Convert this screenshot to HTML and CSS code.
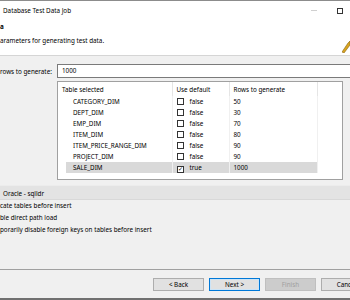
FILE: index.html
```html
<!DOCTYPE html>
<html lang="en">
<head>
    <meta charset="UTF-8">
    <title>Database Test Data Job</title>
    <link rel="stylesheet" href="styles.css">
</head>
<body>
    <div class="window">
        <div class="titlebar">
            <span class="title">Database Test Data Job</span>
            <span class="win-btns">
                <span class="btn-min"></span>
                <span class="btn-max"></span>
            </span>
        </div>

        <div class="banner">
            <div class="banner-text">
                <div class="banner-title">a</div>
                <div class="banner-desc">arameters for generating test data.</div>
            </div>
            <svg class="banner-img" width="8" height="12" viewBox="0 0 8 12">
                <polygon points="0,11 6,2 8,0 8,4 2,12" fill="#d9a521" stroke="#8a6410" stroke-width="0.6"/>
            </svg>
        </div>

        <div class="content">
            <div class="rows-field">
                <label class="rows-label">rows to generate:</label>
                <div class="text-input">1000</div>
            </div>

            <div class="table-box">
                <table class="grid">
                    <thead>
                        <tr>
                            <th class="col-name">Table selected</th>
                            <th class="col-default">Use default</th>
                            <th class="col-rows">Rows to generate</th>
                            <th class="col-fill"></th>
                        </tr>
                    </thead>
                    <tbody>
                        <tr>
                            <td class="name">CATEGORY_DIM</td>
                            <td><span class="check"></span>false</td>
                            <td>50</td>
                            <td class="fill"></td>
                        </tr>
                        <tr>
                            <td class="name">DEPT_DIM</td>
                            <td><span class="check"></span>false</td>
                            <td>30</td>
                            <td class="fill"></td>
                        </tr>
                        <tr>
                            <td class="name">EMP_DIM</td>
                            <td><span class="check"></span>false</td>
                            <td>70</td>
                            <td class="fill"></td>
                        </tr>
                        <tr>
                            <td class="name">ITEM_DIM</td>
                            <td><span class="check"></span>false</td>
                            <td>80</td>
                            <td class="fill"></td>
                        </tr>
                        <tr>
                            <td class="name">ITEM_PRICE_RANGE_DIM</td>
                            <td><span class="check"></span>false</td>
                            <td>90</td>
                            <td class="fill"></td>
                        </tr>
                        <tr>
                            <td class="name">PROJECT_DIM</td>
                            <td><span class="check"></span>false</td>
                            <td>90</td>
                            <td class="fill"></td>
                        </tr>
                        <tr class="selected">
                            <td class="name">SALE_DIM</td>
                            <td><span class="check checked">&#10003;</span>true</td>
                            <td>1000</td>
                            <td class="fill"></td>
                        </tr>
                    </tbody>
                </table>
            </div>

            <div class="group-head">Oracle - sqlldr</div>
            <div class="options">
                <div>cate tables before insert</div>
                <div>ble direct path load</div>
                <div>porarily disable foreign keys on tables before insert</div>
            </div>
        </div>

        <div class="footer">
            <button class="wiz-btn">&lt; Back</button>
            <button class="wiz-btn default">Next &gt;</button>
            <button class="wiz-btn" disabled>Finish</button>
            <button class="wiz-btn">Cancel</button>
        </div>
    </div>
</body>
</html>
```

FILE: styles.css
```css
* {
    box-sizing: border-box;
}

body {
    margin: 0;
    font-family: "Noto Sans", sans-serif;
    font-size: 6.3px;
    color: #000;
    background: #f0f0f0;
}

.window {
    width: 350px;
    height: 300px;
    display: flex;
    flex-direction: column;
    overflow: hidden;
    border-top: 1px solid #8c8c8c;
    border-bottom: 2px solid #707070;
}

.titlebar {
    height: 19px;
    background: #fff;
    display: flex;
    align-items: center;
    padding-left: 3px;
}

.title {
    flex: 1;
}

.win-btns {
    display: flex;
    align-items: center;
    gap: 20px;
    padding-right: 7px;
}

.btn-min {
    width: 6px;
    height: 1px;
    background: #d0d0d0;
}

.btn-max {
    width: 6px;
    height: 6px;
    border: 1px solid #333;
}

.banner {
    height: 36px;
    background: #fff;
    display: flex;
    border-bottom: 1px solid #d5d5d5;
}

.banner-text {
    flex: 1;
    padding-top: 2px;
    line-height: 10px;
}

.banner-title {
    font-weight: bold;
}

.banner-desc {
    margin-top: 4px;
}

.banner-img {
    align-self: flex-end;
    margin-bottom: 2px;
}

.content {
    flex: 1;
    display: flex;
    flex-direction: column;
}

.rows-field {
    display: flex;
    align-items: center;
    margin-top: 8px;
    height: 14px;
}

.rows-label {
    width: 57px;
}

.text-input {
    flex: 1;
    height: 14px;
    line-height: 12px;
    padding-left: 4px;
    background: #fff;
    border: 1px solid #7a7a7a;
    margin-right: -2px;
}

.table-box {
    margin: 3px 7px 0 57px;
    height: 99px;
    background: #fff;
    border: 1px solid #a0a0a0;
}

.grid {
    border-collapse: collapse;
    width: 100%;
    table-layout: fixed;
}

.grid th {
    height: 14px;
    font-weight: normal;
    text-align: left;
    padding: 0 0 0 4px;
    border-right: 1px solid #e5e5e5;
}

.grid td {
    height: 11px;
    padding: 0 0 0 4px;
    white-space: nowrap;
    border-right: 1px solid #f0f0f0;
}

.col-name {
    width: 114px;
}

.col-default {
    width: 57px;
}

.col-rows {
    width: 88px;
}

.grid td.name {
    padding-left: 8px;
    text-indent: 7px;
}

.grid td.fill,
.grid th.col-fill {
    border-right: none;
}

.selected td {
    background: #d9d9d9;
}

.selected td.name {
    background-clip: content-box;
}

.selected td.fill {
    background: none;
}

.check {
    display: inline-block;
    width: 7px;
    height: 7px;
    margin-right: 6px;
    vertical-align: -1px;
    background: #fff;
    border: 1px solid #333;
    font-size: 6px;
    line-height: 5px;
    text-indent: 0;
    text-align: center;
}

.group-head {
    margin-top: 5px;
    height: 15px;
    line-height: 15px;
    padding-left: 3px;
    background: #e3e3e3;
    border-top: 1px solid #ececec;
    border-bottom: 1px solid #d8d8d8;
}

.options {
    line-height: 12px;
}

.footer {
    height: 29px;
    border-top: 1px solid #a0a0a0;
    display: flex;
    gap: 5px;
    padding: 8px 0 0 153px;
}

.wiz-btn {
    flex: none;
    width: 51px;
    height: 13px;
    padding: 0;
    font-family: inherit;
    font-size: 6.3px;
    color: #000;
    background: #e1e1e1;
    border: 1px solid #adadad;
}

.wiz-btn.default {
    border: 1px solid #0078d7;
    box-shadow: inset 0 0 0 1px #cce4f7;
}

.wiz-btn:disabled {
    color: #a0a0a0;
    background: #cccccc;
    border-color: #bfbfbf;
}
```
